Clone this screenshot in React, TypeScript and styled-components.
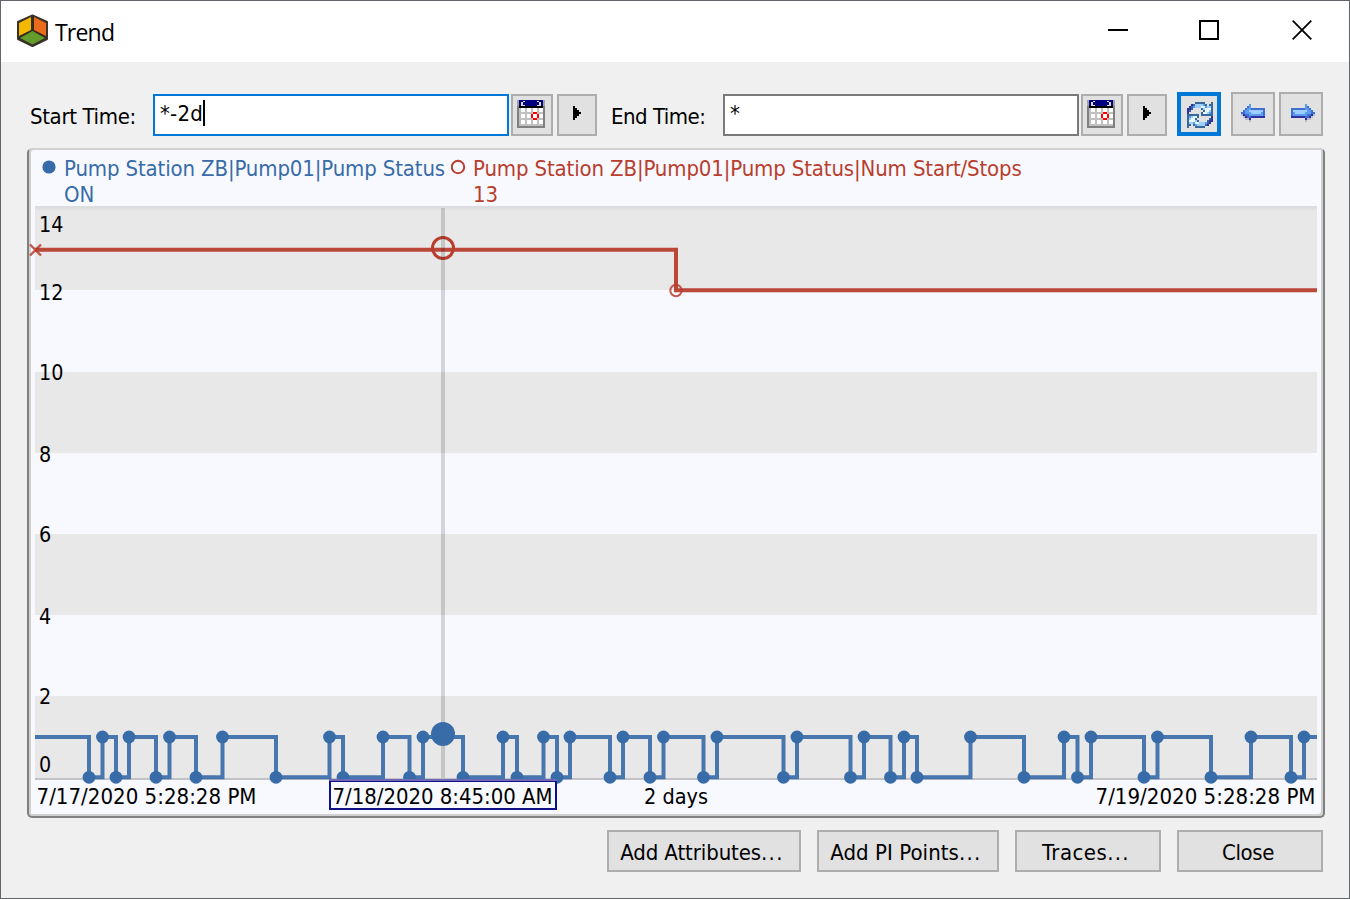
import React from "react";
import styled, { createGlobalStyle } from "styled-components";

const GlobalStyle = createGlobalStyle`
  *, *::before, *::after { box-sizing: border-box; }
  body { margin: 0; overflow: hidden; background: #f0f0f0; }
  button, input { font: inherit; color: inherit; }
  svg { display: block; flex: none; }
`;

const uiFont = `"DejaVu Sans Condensed", "DejaVu Sans", sans-serif`;
const blue = "#386ca8";
const red = "#b83e2e";

const DialogWindow = styled.main`
  display: flex;
  flex-direction: column;
  width: 1350px;
  height: 899px;
  border: 1px solid #62666b;
  background: #f0f0f0;
  color: #000;
  font-family: ${uiFont};
  font-size: 22px;
`;

const TitleBar = styled.header`
  display: flex;
  align-items: center;
  flex: none;
  height: 61px;
  padding: 0 1px 2px 15px;
  background: #fff;
`;

const Title = styled.h1`
  flex: 1;
  margin: 2px 0 0 6px;
  font: 400 23px/32px "Open Sans", "Noto Sans", sans-serif;
  letter-spacing: -0.8px;
`;

const WindowButton = styled.button<{ $width: number }>`
  display: flex;
  align-items: center;
  justify-content: center;
  width: ${(p) => p.$width}px;
  height: 58px;
  padding: 0 0 2px;
  border: 0;
  background: none;
`;

const Toolbar = styled.div`
  display: flex;
  align-items: flex-end;
  flex: none;
  height: 74px;
  padding-left: 29px;
`;

const FieldLabel = styled.label<{ $width: number; $spacing: number }>`
  width: ${(p) => p.$width}px;
  height: 42px;
  line-height: 45px;
  letter-spacing: ${(p) => p.$spacing}px;
  white-space: nowrap;
`;

const TimeField = styled.div<{ $active?: boolean }>`
  display: flex;
  width: 356px;
  height: 42px;
  padding: 4px 5px;
  border: 2px solid ${(p) => (p.$active ? "#0078d7" : "#7a7a7a")};
  background: #fff;
  line-height: 28px;
  letter-spacing: 0.2px;
`;

const Caret = styled.span`
  width: 2px;
  height: 26px;
  background: #000;
`;

const ToolButton = styled.button<{
  $width: number;
  $gap: number;
  $pad?: string;
  $tall?: boolean;
  $active?: boolean;
}>`
  display: flex;
  align-items: center;
  justify-content: center;
  width: ${(p) => p.$width}px;
  height: ${(p) => (p.$tall ? 44 : 42)}px;
  margin-left: ${(p) => p.$gap}px;
  padding: ${(p) => p.$pad ?? "0"};
  border: ${(p) => (p.$active ? "4px solid #0078d7" : "2px solid #adadad")};
  background: #e1e1e1;
`;

const Spacer = styled.div<{ $width: number }>`
  width: ${(p) => p.$width}px;
`;

const TrendPanel = styled.section`
  flex: none;
  width: 1298px;
  height: 670px;
  margin: 12px 0 0 26px;
  border: 2px solid #808080;
  border-top-color: #d0d0d0;
  border-radius: 5px;
  background: #f8f9ff;
  box-shadow: inset 2px 0 #d0d0d0, inset -2px -2px #d0d0d0;
`;

const Legend = styled.div`
  display: flex;
  height: 56px;
  padding: 5px 0 0 13px;
`;

const LegendItem = styled.div<{ $color: string; $width: number }>`
  display: flex;
  width: ${(p) => p.$width}px;
  color: ${(p) => p.$color};
  line-height: 26px;
  white-space: nowrap;
`;

const LegendText = styled.div`
  margin: 1px 0 0 7px;
  letter-spacing: -0.14px;
`;

const Plot = styled.svg`
  margin-left: -2px;
  overflow: visible;
  font-family: ${uiFont};
  font-size: 22px;
`;

const Footer = styled.footer`
  display: flex;
  justify-content: flex-end;
  gap: 16px;
  padding: 12px 26px 0 0;
`;

const ActionButton = styled.button<{ $width: number; $spacing: number }>`
  width: ${(p) => p.$width}px;
  height: 42px;
  padding: 3px 4px 0 0;
  border: 2px solid #adadad;
  background: #e1e1e1;
  line-height: 35px;
  letter-spacing: ${(p) => p.$spacing}px;
  white-space: nowrap;
`;

const Ellipsis = styled.span`
  letter-spacing: 1.3px;
`;

const AppIcon = () => (
  <svg width="33" height="34" viewBox="0 0 33 34">
    <path d="M16.5 1.5 31 8v17L16.5 32 2 25V8Z" fill="#332c20" stroke="#3a3228" strokeWidth="2" strokeLinejoin="round" />
    <path d="M3 9 15 3v13L3 22Z" fill="#f4b800" />
    <path d="M18 3 30 9v13L18 16Z" fill="#e96b1b" />
    <path d="M16.5 17 29 24 16.5 30.5 4 24Z" fill="#629d2c" />
  </svg>
);

const CalendarIcon = () => (
  <svg width="28" height="28" shapeRendering="crispEdges">
    <path d="M0 0h28v28H0Z" fill="#a0a0a0" />
    <path d="M0 6h2v20h24V6h2v22H0Z" fill="#808080" />
    <path d="M2 8h24v18H2Z" fill="#c0c0c0" />
    <path d="M2 0h24v6H2Z" fill="#000080" />
    <path d="M2 6h24v2H2Z" fill="#000" />
    <path d="M4 2h2v4H4ZM22 2h2v4h-2ZM6 1h2v1H6ZM6 5h2v1H6ZM20 1h2v1h-2ZM20 5h2v1h-2Z" fill="#d8d8e8" />
    {[8, 14, 20].map((y) =>
      [4, 10, 16, 22].map((x) => <rect key={`${x}-${y}`} x={x} y={y} width="4" height="4" fill="#fff" />)
    )}
    <path d="M16 12h4v2h-4ZM14 14h2v4h-2ZM20 14h2v4h-2ZM16 18h4v2h-4Z" fill="#f00" />
  </svg>
);

const PlayIcon = () => (
  <svg width="8" height="14" viewBox="0 0 8 14" shapeRendering="crispEdges">
    <path d="M0 0h2v2h2v2h2v2h2v2H6v2H4v2H2v2H0Z" fill="#000" />
  </svg>
);

const palette: Record<string, string> = {
  D: "#36689c",
  P: "#3030a0",
  B: "#5c9cf0",
  M: "#3f6fd0",
  L: "#9ccfff",
  W: "#e6faff",
  g: "#b9bac6",
};

const PixelIcon = ({ rows, flip = false }: { rows: string[]; flip?: boolean }) => (
  <svg width={rows[0].length * 2} height={rows.length * 2} shapeRendering="crispEdges">
    {rows.map((row, y) =>
      [...row].map((cell, x) =>
        palette[cell] ? (
          <rect
            key={`${x}-${y}`}
            x={(flip ? row.length - 1 - x : x) * 2}
            y={y * 2}
            width="2"
            height="2"
            fill={palette[cell]}
          />
        ) : null
      )
    )}
  </svg>
);

const syncTop = [
  "....DDDDD...D",
  "..PDLLLLBD.DD",
  ".PDBLLLWWBLLD",
  "PPD....DLWWWD",
  "PD......DWWLD",
  "P......DWWLBD",
];
const syncRows = [
  ...syncTop,
  "DDDDDD.DDDDDD",
  ...[...syncTop].reverse().map((row) => [...row].reverse().join("")),
];

const arrowRows = [
  "....B.......",
  "...MB.......",
  "..MBBMMMMMMM",
  ".MBBLLLLLLLM",
  "MMBBBLLLLLBM",
  "gPMMBBBBBBBM",
  ".gPMMPPPPPPP",
  "..ggP.......",
  "....g.......",
];

// Chart x positions at which the pump status toggles; the first one is a stop.
const toggles = [
  89, 102.5, 116, 129, 156, 169.5, 196, 222.5, 276, 329.5, 343, 383, 409.5, 423, 463, 503, 517, 543.5, 557, 570,
  610, 623, 650, 663.5, 703.5, 717, 783.5, 797, 850.5, 864, 890.5, 904, 917, 970.5, 1024, 1064, 1077.5, 1091,
  1144, 1157.5, 1211, 1251, 1291, 1304,
];
const onY = 737;
const offY = 777.3;
const statusPath = "M35 737" + toggles.map((x, i) => `H${x}V${i % 2 ? onY : offY}`).join("") + "H1317";

const scale: [string, number][] = [
  ["14", 232], ["12", 300], ["10", 380], ["8", 462], ["6", 542], ["4", 624], ["2", 704], ["0", 772],
];

const TrendPlot = () => (
  <Plot width="1298" height="610" viewBox="27 206 1298 610">
    <path d="M35 206H1317V290H35ZM35 372H1317V453H35ZM35 534H1317V615H35ZM35 696H1317V778H35Z" fill="#e8e8e8" />
    <path d="M35 206H1317V208H35Z" fill="#dcdde0" />
    <path d="M35 208H1317V210H35Z" fill="#e1e1e3" />
    <path d="M35 778H1317V780H35Z" fill="#c3c3c7" />
    {scale.map(([text, y]) => (
      <text key={text} x="39" y={y} textLength={text.length * 12.2} lengthAdjust="spacingAndGlyphs">{text}</text>
    ))}
    <path d="M35 249.7H676V290.2H1317" fill="none" stroke={red} strokeWidth="4" strokeOpacity="0.95" />
    <path d="m30 244.5 11 11M41 244.5 30 255.5" stroke={red} strokeWidth="2.4" opacity="0.85" />
    <circle cx="676" cy="290.5" r="5.7" fill="none" stroke={red} strokeWidth="2" opacity="0.85" />
    <circle cx="443" cy="248" r="10.5" fill="none" stroke={red} strokeWidth="3" />
    <path d={statusPath} fill="none" stroke={blue} strokeWidth="4" strokeOpacity="0.92" />
    {toggles.map((x, i) => <circle key={x} cx={x} cy={i % 2 ? onY : offY} r="6.4" fill={blue} />)}
    <path d="M441 208h4v570h-4Z" fill="#000" fillOpacity="0.15" />
    <circle cx="443" cy="734" r="12" fill={blue} />
    <path d="M329 781H557V810H329Z" fill="#f8f9ff" />
    <rect x="330" y="781" width="226" height="28" fill="none" stroke="#10108a" strokeWidth="2" />
    <path d="M329 779H557V781H329Z" fill="#6f68b4" />
    <text x="36.5" y="804" textLength="220" lengthAdjust="spacingAndGlyphs">7/17/2020 5:28:28 PM</text>
    <text x="332.5" y="804" textLength="220" lengthAdjust="spacingAndGlyphs">7/18/2020 8:45:00 AM</text>
    <text x="644" y="804" textLength="64" lengthAdjust="spacingAndGlyphs">2 days</text>
    <text x="1095.5" y="804" textLength="220" lengthAdjust="spacingAndGlyphs">7/19/2020 5:28:28 PM</text>
  </Plot>
);

const TimeButtons = () => (
  <>
    <ToolButton $width={42} $gap={2} $pad="0 2px 2px 0" aria-label="Pick date"><CalendarIcon /></ToolButton>
    <ToolButton $width={40} $gap={4} $pad="0 0 4px" aria-label="Time options"><PlayIcon /></ToolButton>
  </>
);

export default function App() {
  return (
    <>
      <GlobalStyle />
      <DialogWindow>
        <TitleBar>
          <AppIcon />
          <Title>Trend</Title>
          <WindowButton $width={88} aria-label="Minimize">
            <svg width="20" height="20"><path d="M0 10h20" stroke="#000" strokeWidth="2" /></svg>
          </WindowButton>
          <WindowButton $width={94} aria-label="Maximize">
            <svg width="20" height="20"><path d="M1 1h18v18H1Z" fill="none" stroke="#000" strokeWidth="2" /></svg>
          </WindowButton>
          <WindowButton $width={92} aria-label="Close window">
            <svg width="20" height="20"><path d="m.7.7 18.6 18.6M19.3.7.7 19.3" stroke="#000" strokeWidth="1.8" /></svg>
          </WindowButton>
        </TitleBar>
        <Toolbar>
          <FieldLabel $width={123} $spacing={-0.35}>Start Time:</FieldLabel>
          <TimeField $active>*-2d<Caret /></TimeField>
          <TimeButtons />
          <Spacer $width={14} />
          <FieldLabel $width={112} $spacing={-0.5}>End Time:</FieldLabel>
          <TimeField>*</TimeField>
          <TimeButtons />
          <ToolButton $width={44} $gap={10} $pad="2px 0 0 2px" $tall $active aria-label="Refresh">
            <PixelIcon rows={syncRows} />
          </ToolButton>
          <ToolButton $width={44} $gap={10} $pad="0 0 2px" $tall aria-label="Back">
            <PixelIcon rows={arrowRows} />
          </ToolButton>
          <ToolButton $width={44} $gap={4} $pad="0 0 2px 4px" $tall aria-label="Forward">
            <PixelIcon rows={arrowRows} flip />
          </ToolButton>
        </Toolbar>
        <TrendPanel>
          <Legend>
            <LegendItem $color={blue} $width={409}>
              <svg width="15" height="26"><circle cx="7" cy="12" r="6.6" fill={blue} /></svg>
              <LegendText>Pump Station ZB|Pump01|Pump Status<br />ON</LegendText>
            </LegendItem>
            <LegendItem $color={red} $width={600}>
              <svg width="15" height="26"><circle cx="7" cy="12" r="6.2" fill="none" stroke={red} strokeWidth="2" /></svg>
              <LegendText>Pump Station ZB|Pump01|Pump Status|Num Start/Stops<br />13</LegendText>
            </LegendItem>
          </Legend>
          <TrendPlot />
        </TrendPanel>
        <Footer>
          <ActionButton $width={194} $spacing={-0.1}>Add Attributes<Ellipsis>...</Ellipsis></ActionButton>
          <ActionButton $width={182} $spacing={0.05}>Add PI Points<Ellipsis>...</Ellipsis></ActionButton>
          <ActionButton $width={146} $spacing={0.45}>Traces<Ellipsis>...</Ellipsis></ActionButton>
          <ActionButton $width={146} $spacing={-0.4}>Close</ActionButton>
        </Footer>
      </DialogWindow>
    </>
  );
}
